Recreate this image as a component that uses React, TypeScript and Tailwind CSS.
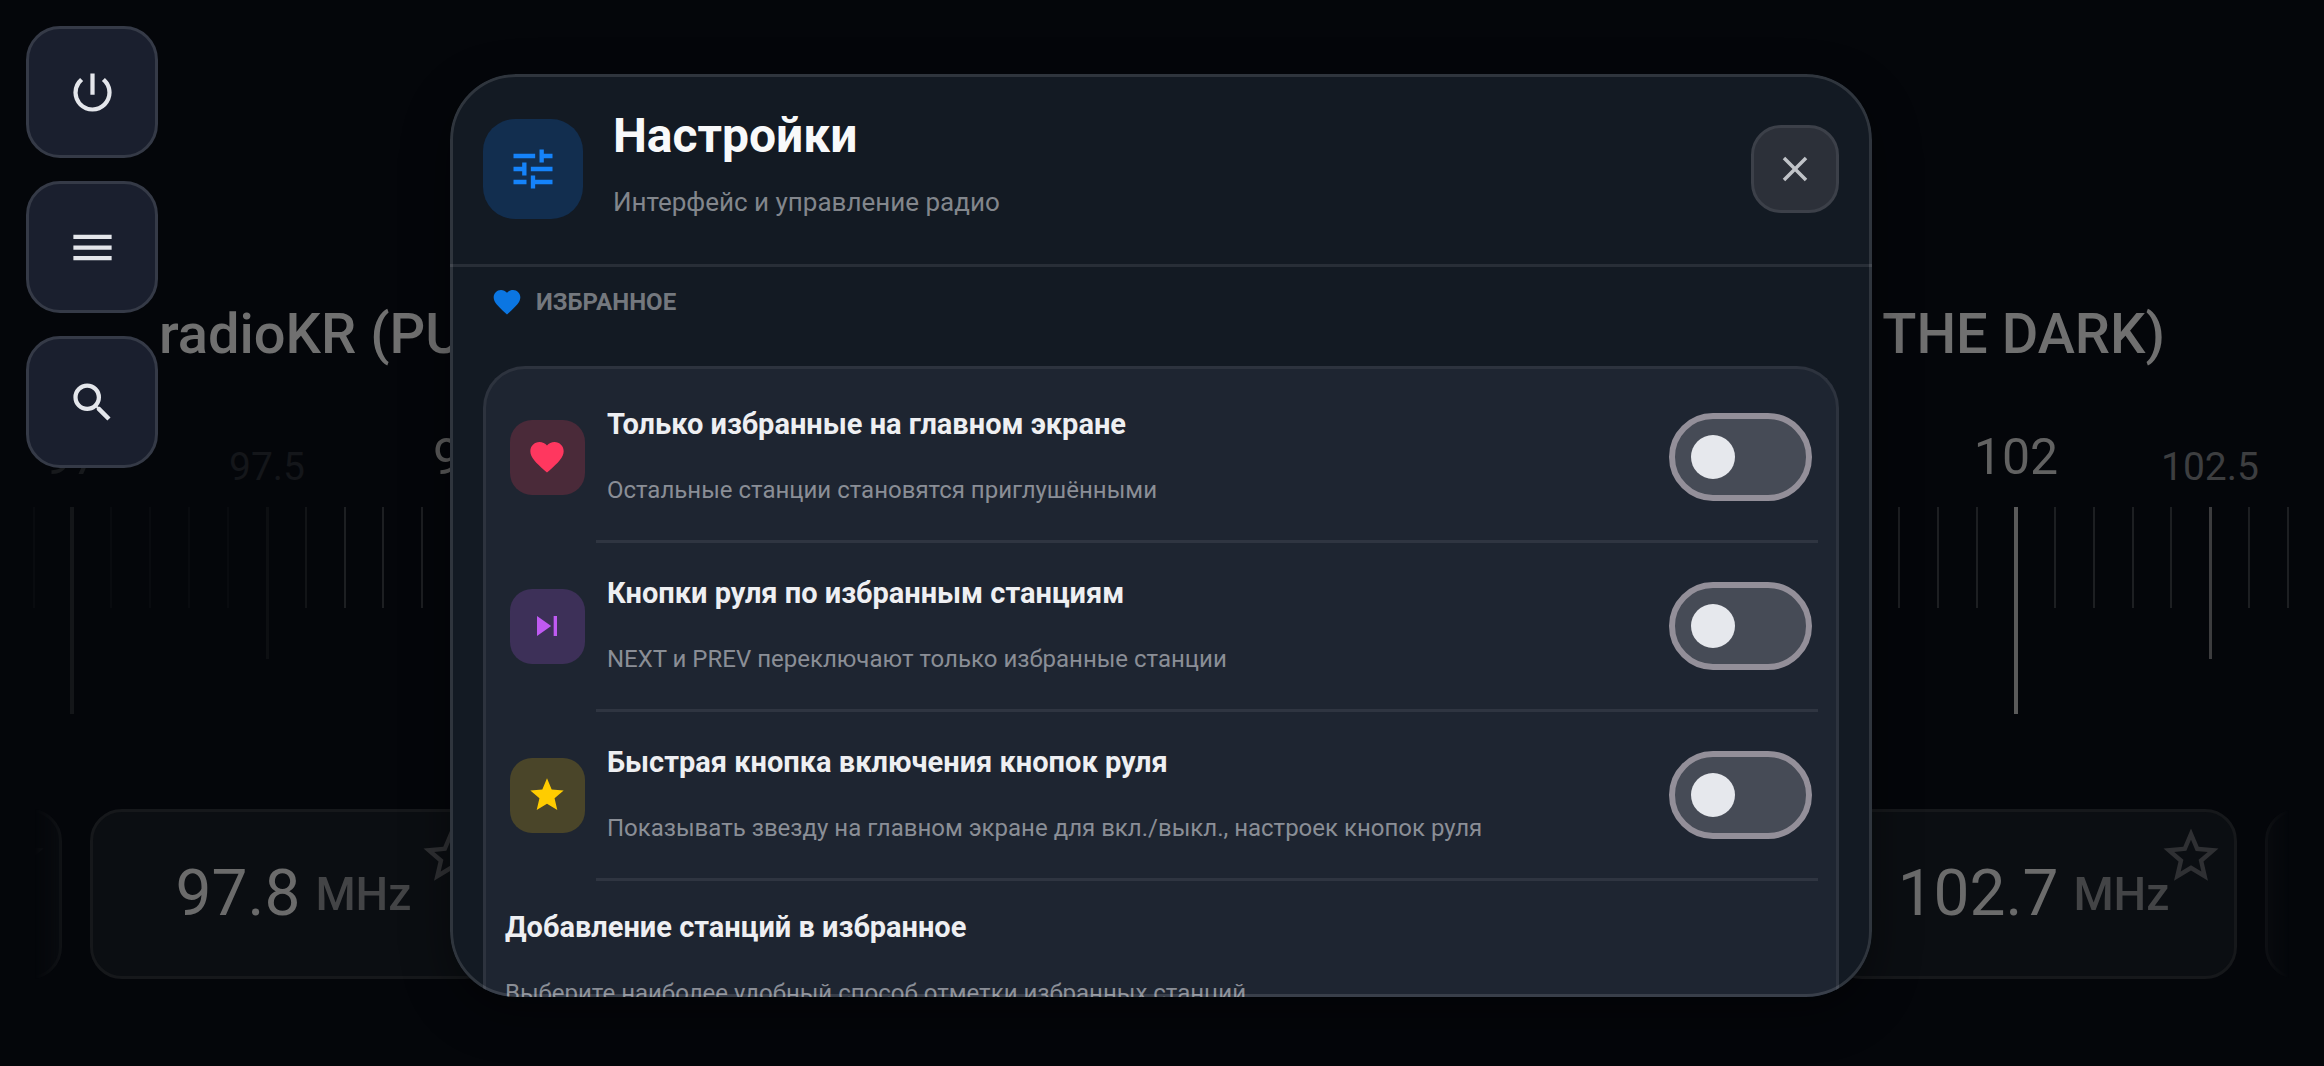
import { useState } from "react";
import type { ReactNode } from "react";
import {
  MdClose,
  MdFavorite,
  MdMenu,
  MdPowerSettingsNew,
  MdSearch,
  MdSkipNext,
  MdStar,
  MdStarBorder,
  MdTune,
} from "react-icons/md";

const TICK = 38.87;
const TUNED = 99.803;

const labels = [
  { freq: 97, color: "#17191c", major: true },
  { freq: 97.5, color: "#14161a", major: false },
  { freq: 98, color: "#5a5a5a", major: true },
  { freq: 102, color: "#626262", major: true },
  { freq: 102.5, color: "#3d3e40", major: false },
];

function tickColor(step: number) {
  const major = step % 10 === 0;
  const half = step % 5 === 0;
  if (step < 976) return major ? "#141619" : half ? "#0d0f12" : "#090b0f";
  if (step === 976) return "#121417";
  if (major) return "#5a5a5a";
  return half ? "#3c3c3e" : "#1d1f22";
}

function Dial() {
  const ticks = Array.from({ length: 60 }, (_, i) => 968 + i);
  return (
    <svg className="mt-[54px] block h-[300px] w-full" aria-label="Шкала частот">
      <svg x="50%" className="overflow-visible">
        {ticks.map((s) => {
          const x = Math.round((s - TUNED * 10) * TICK);
          const major = s % 10 === 0;
          const half = s % 5 === 0;
          const w = major ? 4 : half ? 3 : 2;
          return (
            <rect
              key={s}
              x={x - Math.floor(w / 2)}
              y={87}
              width={w}
              height={major ? 207 : half ? 152 : 101}
              fill={tickColor(s)}
            />
          );
        })}
        {labels.map((l) => (
          <text
            key={l.freq}
            x={Math.round((l.freq - TUNED) * 10 * TICK)}
            y={l.major ? 54 : 60}
            textAnchor="middle"
            fill={l.color}
            fontSize={l.major ? 50 : 39}
          >
            {l.freq}
          </text>
        ))}
      </svg>
    </svg>
  );
}

function StationCard({ freq }: { freq?: string }) {
  return (
    <button
      type="button"
      aria-label={freq ? undefined : "Станция"}
      className="relative flex h-[170px] w-[407px] shrink-0 items-center justify-center rounded-[32px] border-[3px] border-[#16181b] bg-[#0b0e12]"
    >
      {freq && (
        <span className="flex items-center gap-[15px]">
          <span className="text-[64px] leading-[76px] text-[#6b6b6b]">{freq}</span>
          <span className="text-[46px] font-medium leading-[76px] text-[#434446]">MHz</span>
        </span>
      )}
      <MdStarBorder className="absolute right-[10px] top-[11px] size-[66px] text-[#2f3033]" />
    </button>
  );
}

function SideButton({ label, children }: { label: string; children: ReactNode }) {
  return (
    <button
      type="button"
      aria-label={label}
      className="flex size-[132px] items-center justify-center rounded-[34px] border-[3px] border-[#353a47] bg-[#1a1f2e] text-[#e4e6eb]"
    >
      {children}
    </button>
  );
}

type RowProps = {
  id: string;
  title: string;
  description: string;
  tile: string;
  icon: ReactNode;
};

function SettingRow({ id, title, description, tile, icon }: RowProps) {
  const [on, setOn] = useState(false);
  return (
    <>
      <div className="flex items-center gap-[22px] px-6 py-[30px]">
        <div className={`flex size-[75px] shrink-0 items-center justify-center rounded-[22px] ${tile}`}>{icon}</div>
        <label htmlFor={id} className="flex grow flex-col gap-[26px]">
          <span className="text-[29px] font-bold leading-10 text-[#eeeff2]">{title}</span>
          <span className="text-[24px] leading-10 text-[#8a8e96]">{description}</span>
        </label>
        <input
          id={id}
          type="checkbox"
          role="switch"
          checked={on}
          onChange={() => setOn(!on)}
          className="flex h-[88px] w-[143px] shrink-0 appearance-none items-center rounded-full border-[6px] border-[#938f99] bg-[#464b56] px-4 before:block before:size-11 before:rounded-full before:bg-[#e6e8ed] checked:justify-end checked:bg-[#0a84ff]"
        />
      </div>
      <div className="ml-[110px] mr-[18px] h-[3px] bg-[#2f3541]" />
    </>
  );
}

export default function App() {
  return (
    <div className="relative min-h-screen overflow-hidden bg-[#04060a] font-[Roboto,sans-serif]">
      <main className="pb-[87px] pt-[302px]">
        <div className="flex justify-between px-[159px] text-[56px] font-medium leading-[64px] text-[#707070]">
          <span>radioKR (PU</span>
          <span>THE DARK)</span>
        </div>
        <Dial />
        <div className="mt-[89px] flex justify-between px-[35px] [mask-image:linear-gradient(to_right,transparent_35px,black_75px,black_calc(100%-75px),transparent_calc(100%-35px))]">
          <div className="flex w-[462px] justify-end gap-7 overflow-hidden">
            <StationCard />
            <StationCard freq="97.8" />
          </div>
          <div className="flex w-[459px] gap-7 overflow-hidden">
            <StationCard freq="102.7" />
            <StationCard />
          </div>
        </div>
      </main>

      <nav className="absolute left-[26px] top-[26px] flex flex-col gap-[23px]">
        <SideButton label="Питание">
          <MdPowerSettingsNew className="size-[51px]" />
        </SideButton>
        <SideButton label="Меню">
          <MdMenu className="size-[51px]" />
        </SideButton>
        <SideButton label="Поиск">
          <MdSearch className="size-[51px]" />
        </SideButton>
      </nav>

      <div className="pointer-events-none absolute inset-0 flex pb-[69px] pl-[19.36%] pt-[74px]">
        <section
          role="dialog"
          aria-labelledby="settings-title"
          className="pointer-events-auto relative flex w-[61.2vw] flex-col overflow-hidden rounded-[66px] bg-[#131a23] shadow-[0_16px_48px_rgba(0,0,0,0.4)]"
        >
          <header className="flex h-[193px] shrink-0 items-center gap-[30px] border-b-[3px] border-[#282e37] px-[33px]">
            <div className="flex size-[100px] shrink-0 items-center justify-center rounded-[32px] bg-[#122e4f]">
              <MdTune className="size-[52px] text-[#1583fa]" />
            </div>
            <div className="flex grow flex-col gap-[18px] pb-2">
              <h1 id="settings-title" className="text-[48px] font-bold leading-[56px] text-[#f8f9fa]">
                Настройки
              </h1>
              <p className="text-[26px] leading-10 text-[#82868c]">Интерфейс и управление радио</p>
            </div>
            <button
              type="button"
              aria-label="Закрыть"
              className="flex size-[88px] shrink-0 items-center justify-center rounded-[30px] border-[3px] border-[#3c4049] bg-[#2c3039] text-[#c0c3c8]"
            >
              <MdClose className="size-[42px]" />
            </button>
          </header>

          <div className="min-h-0 grow overflow-hidden px-[33px] pt-[19px]">
            <h2 className="flex items-center gap-[13px] pl-2 text-[24px] font-bold leading-8 text-[#74787e]">
              <MdFavorite className="size-8 text-[#0b76e2]" />
              ИЗБРАННОЕ
            </h2>
            <div className="mt-12 rounded-t-[42px] border-x-[3px] border-t-[3px] border-[#2d333e] bg-[#1e2531] pt-[5px]">
              <SettingRow
                id="only-favorites"
                title="Только избранные на главном экране"
                description="Остальные станции становятся приглушёнными"
                tile="bg-[#4a2a39]"
                icon={<MdFavorite className="size-10 text-[#ff375f]" />}
              />
              <SettingRow
                id="wheel-favorites"
                title="Кнопки руля по избранным станциям"
                description="NEXT и PREV переключают только избранные станции"
                tile="bg-[#3d3058]"
                icon={<MdSkipNext className="size-10 text-[#bf5af2]" />}
              />
              <SettingRow
                id="quick-star"
                title="Быстрая кнопка включения кнопок руля"
                description="Показывать звезду на главном экране для вкл./выкл., настроек кнопок руля"
                tile="bg-[#4a4529]"
                icon={<MdStar className="size-10 text-[#ffcc00]" />}
              />
              <div className="flex flex-col gap-[26px] px-[19px] pt-[26px]">
                <h3 className="text-[29px] font-bold leading-10 text-[#eeeff2]">Добавление станций в избранное</h3>
                <p className="text-[24px] leading-10 text-[#8a8e96]">
                  Выберите наиболее удобный способ отметки избранных станций
                </p>
              </div>
            </div>
          </div>
          <div className="pointer-events-none absolute inset-0 rounded-[66px] border-[3px] border-white/12" />
        </section>
      </div>
    </div>
  );
}
